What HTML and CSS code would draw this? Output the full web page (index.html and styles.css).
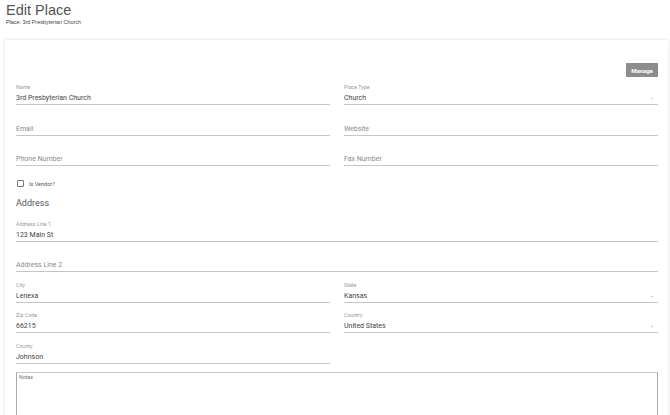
FILE: index.html
```html
<!DOCTYPE html>
<html>
<head>
<meta charset="utf-8">
<title>Edit Place</title>
<link rel="stylesheet" href="styles.css">
</head>
<body>
<div class="page">
  <header class="page-head">
    <h1 class="title">Edit Place</h1>
    <div class="subtitle">Place: 3rd Presbyterian Church</div>
  </header>
  <main class="card">
    <div class="toolbar"><button class="btn-manage" type="button">Manage</button></div>
    <div class="grid">
      <div class="field">
        <label class="lbl">Name</label>
        <div class="ctl">3rd Presbyterian Church</div>
      </div>
      <div class="field">
        <label class="lbl">Place Type</label>
        <div class="ctl select">Church<span class="caret"></span></div>
      </div>
      <div class="field">
        <label class="lbl"></label>
        <div class="ctl ph">Email</div>
      </div>
      <div class="field">
        <label class="lbl"></label>
        <div class="ctl ph">Website</div>
      </div>
      <div class="field">
        <label class="lbl"></label>
        <div class="ctl ph">Phone Number</div>
      </div>
      <div class="field">
        <label class="lbl"></label>
        <div class="ctl ph">Fax Number</div>
      </div>
    </div>
    <div class="check-row">
      <span class="checkbox"></span>
      <span class="check-label">Is Vendor?</span>
    </div>
    <h2 class="section">Address</h2>
    <div class="stack">
      <div class="field">
        <label class="lbl">Address Line 1</label>
        <div class="ctl">123 Main St</div>
      </div>
      <div class="field">
        <label class="lbl"></label>
        <div class="ctl ph">Address Line 2</div>
      </div>
      <div class="grid">
        <div class="field">
          <label class="lbl">City</label>
          <div class="ctl">Lenexa</div>
        </div>
        <div class="field">
          <label class="lbl">State</label>
          <div class="ctl select">Kansas<span class="caret"></span></div>
        </div>
        <div class="field">
          <label class="lbl">Zip Code</label>
          <div class="ctl">66215</div>
        </div>
        <div class="field">
          <label class="lbl">Country</label>
          <div class="ctl select">United States<span class="caret"></span></div>
        </div>
        <div class="field">
          <label class="lbl">County</label>
          <div class="ctl">Johnson</div>
        </div>
        <div></div>
      </div>
    </div>
    <div class="notes">Notes</div>
  </main>
</div>
</body>
</html>
```
FILE: styles.css
```css
* { box-sizing: border-box; }
html, body { margin: 0; padding: 0; background: #fff; }
body { font-family: Roboto, "Liberation Sans", sans-serif; color: #444; overflow: hidden; }
.page { padding: 0 2px 0 5px; }
.page-head { padding: 2px 0 0 1px; height: 40px; }
.title {
  margin: 0;
  font-family: "Liberation Sans", Arial, sans-serif;
  font-weight: normal;
  font-size: 14.5px;
  line-height: 17px;
  color: #555;
}
.subtitle {
  font-family: "Liberation Sans", Arial, sans-serif;
  font-size: 5.4px;
  line-height: 7px;
  color: #444;
}
.card {
  background: #fff;
  box-shadow: 0 0 3px rgba(0,0,0,0.14);
  padding: 23px 10px 0 11px;
  height: 420px;
}
.toolbar { display: flex; justify-content: flex-end; height: 14px; margin-bottom: 7px; }
.btn-manage {
  background: #8c8c8c;
  color: #fff;
  border: 0;
  width: 32px;
  height: 14px;
  padding: 0;
  font-family: Roboto, sans-serif;
  font-weight: bold;
  font-size: 6px;
}
.grid {
  display: grid;
  grid-template-columns: 1fr 1fr;
  column-gap: 14px;
  row-gap: 9.5px;
}
.stack { display: flex; flex-direction: column; gap: 9.5px; }
.field { display: flex; flex-direction: column; height: 21px; }
.lbl { font-size: 5.3px; line-height: 7px; height: 7px; color: #9a9a9a; }
.ctl {
  height: 14px;
  padding-top: 1px;
  line-height: 12px;
  font-size: 7px;
  color: #444;
  border-bottom: 1px solid #c6c6c6;
  position: relative;
}
.ctl.ph { color: #8a8a8a; }
.caret {
  position: absolute;
  right: 5px;
  top: 7px;
  width: 0;
  height: 0;
  border-left: 1.5px solid transparent;
  border-right: 1.5px solid transparent;
  border-top: 1.5px solid #999;
}
.check-row { display: flex; align-items: center; gap: 5px; margin-top: 14px; height: 7px; padding-left: 1px; }
.checkbox { width: 7px; height: 7px; border: 1px solid #777; border-radius: 1px; }
.check-label { font-size: 5.5px; color: #555; }
.section {
  margin: 11px 0 11.5px 0;
  font-size: 9px;
  line-height: 11px;
  font-weight: normal;
  color: #555;
}
.notes {
  margin-top: 8px;
  height: 70px;
  border: 1px solid #a9a9a9;
  border-top-color: #c8c8c8;
  font-size: 5.3px;
  color: #777;
  padding: 1px 2px;
}
```
